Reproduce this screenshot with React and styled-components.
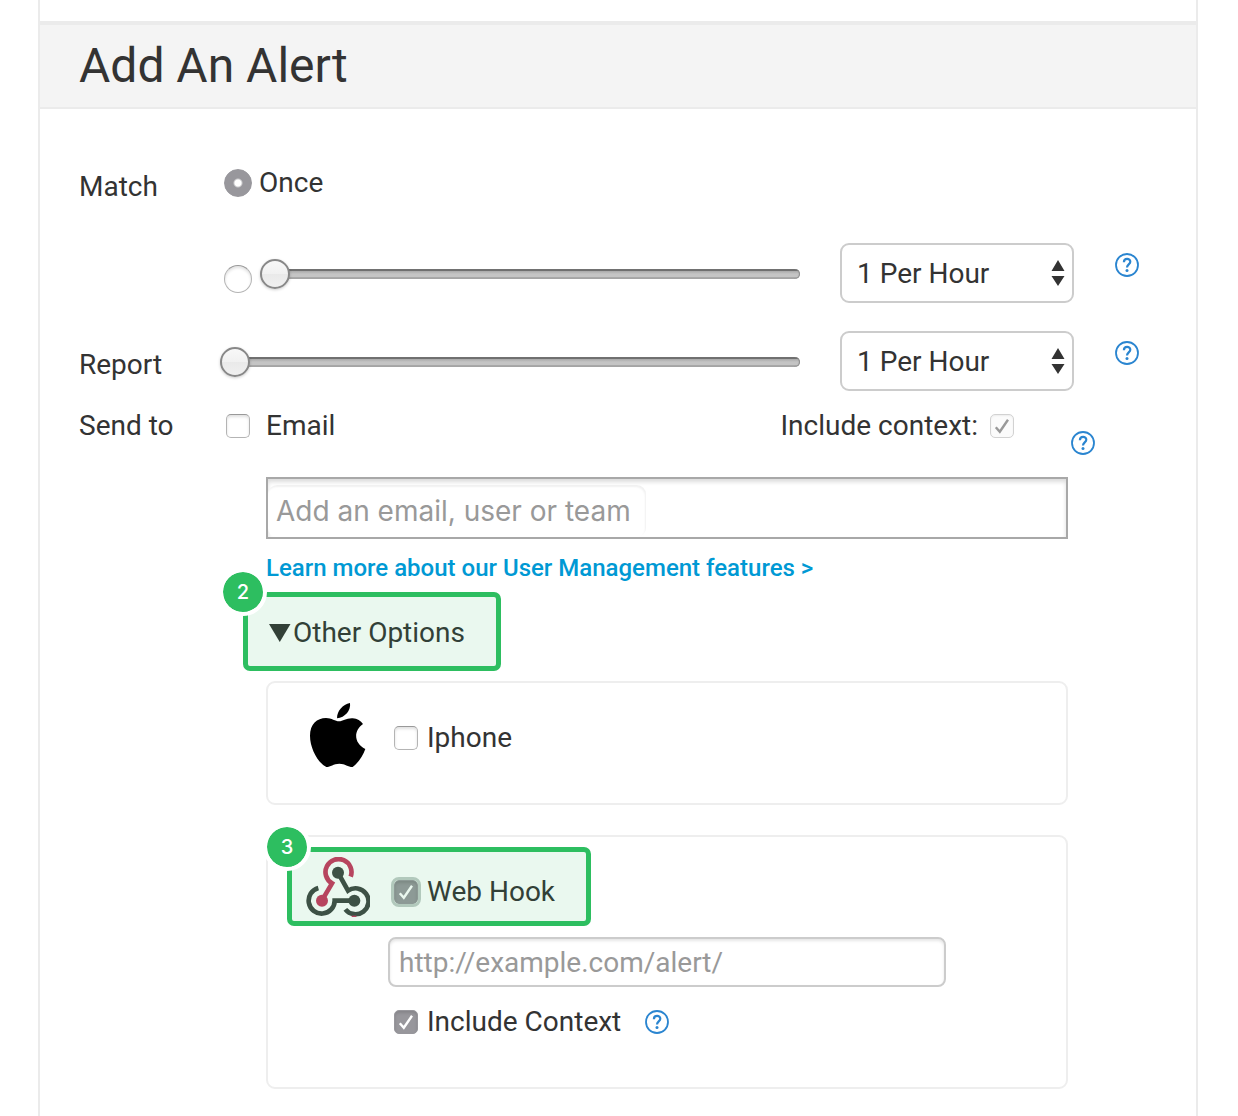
import React, { useState } from "react";
import styled, { createGlobalStyle, css } from "styled-components";

const green = "#2dbe60";
const ink = "#333";

const GlobalStyle = createGlobalStyle`
  *, *::before, *::after { box-sizing: border-box; }
  body {
    margin: 0;
    background: #fff;
    color: ${ink};
    font: 400 28px/36px Roboto, "Liberation Sans", sans-serif;
  }
  button, input, select { font: inherit; color: inherit; margin: 0; }
`;

const Page = styled.div`
  padding: 0 40px 0 38px;
  overflow-x: clip;
`;

const Panel = styled.main`
  min-height: 100vh;
  padding-top: 21px;
  border: solid #ebebeb;
  border-width: 0 2px;
`;

const Header = styled.header`
  padding: 10px 39px;
  background: #f4f4f4;
  border-top: 4px solid #ebebeb;
  border-bottom: 2px solid #ebebeb;
`;

const Title = styled.h1`
  margin: 0;
  font-size: 48px;
  font-weight: 400;
  line-height: 62px;
`;

const Form = styled.form`
  padding: 52px 57px 27px 39px;
`;

const Row = styled.div`
  display: grid;
  grid-template-columns: 141px minmax(0, 1fr) 234px 65px;
  align-items: center;
  margin-bottom: ${(p) => p.$space}px;
`;

const RowLabel = styled.span`
  padding-top: 8px;
`;

const SliderCell = styled.div`
  display: flex;
  align-items: center;
  gap: 8px;
  padding: 2px 40px 0 ${(p) => (p.$inset ? 4 : 0)}px;
`;

const HelpCell = styled.div`
  display: flex;
  align-self: start;
  justify-content: flex-end;
  padding-top: 10px;
`;

const Choice = styled.label`
  display: inline-flex;
  align-items: center;
  gap: ${(p) => p.$gap || 9}px;
  cursor: pointer;
`;

const OnceCell = styled.div`
  display: flex;
  grid-column: 2 / -1;
  padding-left: 4px;
`;

const Radio = styled.input.attrs({ type: "radio" })`
  appearance: none;
  flex: none;
  width: 28px;
  height: 28px;
  margin-top: ${(p) => (p.$low ? 10 : 0)}px;
  border: 1px solid #b4b4b4;
  border-top-color: #999;
  border-radius: 50%;
  background: #fff;
  box-shadow: inset 0 2px 3px rgba(0, 0, 0, 0.12);

  &:checked {
    border-color: #98979c;
    background: radial-gradient(circle, #fff 0 3px, #98979c 5px);
    box-shadow: none;
  }
`;

const Range = styled.input.attrs({ type: "range" })`
  appearance: none;
  flex: 1;
  min-width: 0;
  height: 30px;
  background: transparent;

  &::-webkit-slider-runnable-track {
    height: 10px;
    border-radius: 5px;
    background: linear-gradient(#6f6f6f 0 2px, #a9a9a9 2px, #c4c4c4 5px 8px, #a8a8a8 8px);
    box-shadow: inset -1px 0 1px #888;
  }

  &::-webkit-slider-thumb {
    appearance: none;
    width: 30px;
    height: 30px;
    margin-top: -10px;
    border: 2px solid #888;
    border-radius: 50%;
    background: linear-gradient(#f8f8f8, #f1f1f1 50%, #e9e9e9 50%, #f0f0f0);
    box-shadow: 0 1px 3px rgba(0, 0, 0, 0.2);
  }
`;

const SelectBox = styled.div`
  position: relative;

  svg {
    position: absolute;
    top: 17px;
    right: 9px;
    pointer-events: none;
  }
`;

const Select = styled.select`
  appearance: none;
  display: block;
  width: 100%;
  height: 60px;
  padding: 1px 40px 0 15px;
  border: 2px solid #ccc;
  border-radius: 9px;
  background: #fff;
`;

const HelpButton = styled.button`
  display: block;
  flex: none;
  width: 24px;
  height: 24px;
  padding: 0;
  border: 0;
  background: none;
  cursor: pointer;

  svg { display: block; }
`;

const SendRow = styled.div`
  display: flex;
  align-items: flex-start;
  padding-right: 44px;
`;

const SendLabel = styled.span`
  width: 147px;
`;

const ContextGroup = styled.div`
  display: flex;
  align-items: flex-start;
  gap: 57px;
  margin-left: auto;

  ${HelpButton} { margin-top: 23px; }
`;

const checkedLook = css`
  border-color: #98979c;
  background: #98979c;
`;

const Tick = styled.span`
  position: relative;
  display: inline-flex;
  flex: none;
  width: 24px;
  height: 24px;

  input {
    appearance: none;
    width: 24px;
    height: 24px;
    border: 1px solid #b4b4b4;
    border-top-color: #999;
    border-radius: 5px;
    background: #fff;
    box-shadow: inset 0 2px 3px rgba(0, 0, 0, 0.12);
  }
  input:checked { ${checkedLook} }
  input:disabled {
    border-color: #d2d2d2;
    background: #fbfbfb;
    box-shadow: inset 0 1px 2px rgba(0, 0, 0, 0.06);
  }
  svg {
    position: absolute;
    inset: 0;
    color: #fff;
    pointer-events: none;
  }
  input:disabled + svg { color: #999; }
  input:not(:checked) + svg { display: none; }

  ${(p) =>
    p.$ring &&
    css`
      input {
        outline: 3px solid #c1cbc7;
      }
    `}
`;

const SendBody = styled.div`
  padding: 22px 71px 0 187px;
`;

const Recipients = styled.div`
  display: flex;
  height: 62px;
  padding-top: 6px;
  border: 2px solid #a8a8a8;
  box-shadow: inset 0 3px 4px rgba(0, 0, 0, 0.14);
`;

const RecipientInput = styled.input`
  width: 378px;
  height: 52px;
  padding: 0 8px;
  border: 0;
  border-radius: 9px;
  background: #fff;
  box-shadow: inset -1px 2px 2px rgba(0, 0, 0, 0.06);
  font-family: Inter, "Liberation Sans", sans-serif;

  &::placeholder { color: #999; }
`;

const LearnMore = styled.a`
  display: block;
  width: fit-content;
  margin-top: 13px;
  color: #0099d4;
  font-size: 24px;
  font-weight: 500;
  line-height: 32px;
  text-decoration: none;
`;

const Marked = styled.div`
  position: relative;
  width: fit-content;
`;

const Highlight = styled.div`
  position: absolute;
  inset: ${(p) => p.$inset};
  border: 5px solid ${green};
  border-radius: 7px;
  background: rgba(45, 190, 96, 0.1);
  pointer-events: none;
`;

const StepBadge = styled.span`
  position: absolute;
  top: -29px;
  left: -29px;
  width: 48px;
  height: 48px;
  border: 4px solid #fff;
  border-radius: 50%;
  background: ${green};
  background-clip: padding-box;
  color: #fff;
  font: 500 20px/41px Inter, "Liberation Sans", sans-serif;
  text-align: center;
`;

const OptionsToggle = styled.button`
  display: flex;
  align-items: center;
  gap: 2px;
  padding: 0 0 0 3px;
  border: 0;
  background: none;
  cursor: pointer;
`;

const OptionsArea = styled.div`
  margin-top: 31px;
`;

const CardList = styled.div`
  display: flex;
  flex-direction: column;
  gap: 30px;
  margin-top: 30px;
`;

const Card = styled.section`
  padding: 20px 120px ${(p) => p.$bottom}px 38px;
  border: 2px solid #eee;
  border-radius: 9px;
`;

const CardHead = styled.div`
  display: flex;
  align-items: center;
  gap: 24px;

  > svg { display: block; }
  ${Choice} { padding-top: 6px; }
`;

const CardBody = styled.div`
  padding: 16px 0 0 82px;
`;

const UrlInput = styled.input`
  display: block;
  width: 100%;
  height: 50px;
  padding: 0 9px;
  border: 2px solid #ccc;
  border-radius: 8px;
  background: #fff;
  box-shadow: inset 0 2px 3px rgba(0, 0, 0, 0.1);

  &::placeholder { color: #999; }
`;

const ContextLine = styled.div`
  display: flex;
  align-items: center;
  gap: 24px;
  padding: 17px 0 0 6px;
`;

function Help({ topic }) {
  return (
    <HelpButton type="button" aria-label={`Help: ${topic}`}>
      <svg width="24" height="24" viewBox="0 0 24 24" fill="none" stroke="#2a85d0" aria-hidden="true">
        <circle cx="12" cy="12" r="11" strokeWidth="1.8" />
        <path d="M8.900 9.200C8.900 4.900 15.300 5 15.300 8.800c0 2.500-3.300 2.800-3.300 5.600" strokeWidth="2.200" />
        <circle cx="12" cy="17.600" r="1.500" fill="#2a85d0" stroke="none" />
      </svg>
    </HelpButton>
  );
}

function Checkbox({ ring, ...props }) {
  return (
    <Tick $ring={ring}>
      <input type="checkbox" {...props} />
      <svg width="24" height="24" viewBox="0 0 24 24" fill="none" stroke="currentColor" strokeWidth="2.4" aria-hidden="true">
        <path d="M5.800 13.200l4 4.600L18 5.800" />
      </svg>
    </Tick>
  );
}

function RateSelect({ label }) {
  return (
    <SelectBox>
      <Select aria-label={label} defaultValue="1">
        <option value="1">1 Per Hour</option>
      </Select>
      <svg width="14" height="27" viewBox="0 0 14 27" fill={ink} aria-hidden="true">
        <path d="M7 0l6.500 11H.5zM7 26L.5 16h13z" />
      </svg>
    </SelectBox>
  );
}

function AppleLogo() {
  return (
    <svg width="64" height="64" viewBox="168 99 192 192" aria-hidden="true">
      <path d="M300 99c3 22-15 44-39 46 0-22 17-42 39-46z" />
      <path d="M267 154c12 0 22-10 41-9 14 1 24 7 31 17-28 20-29 56 7 75-7 21-22 42-38 54-15 0-22-10-40-10s-26 10-39 10c-26-13-49-57-49-94 0-34 21-53 48-53 17 0 28 10 39 10z" />
    </svg>
  );
}

function WebhookLogo() {
  return (
    <svg width="64" height="64" viewBox="168 111 192 192" fill="none" strokeWidth="14" aria-hidden="true">
      <path d="M302 170A39 39 0 1 0 246 190L219 236" stroke="#c7385f" />
      <circle cx="216" cy="242" r="18" fill="#c7385f" />
      <path d="M264 158L294 212A39 39 0 1 1 286 268" stroke="#3f4642" />
      <path d="M313 242H254A39 39 0 1 1 205 204" stroke="#3f4642" />
      <circle cx="264" cy="158" r="18" fill="#3f4642" />
      <circle cx="313" cy="242" r="18" fill="#3f4642" />
      <path d="M305 289h14" stroke="#c7385f" strokeWidth="4" />
    </svg>
  );
}

export default function App() {
  const [mode, setMode] = useState("once");
  const [open, setOpen] = useState(true);

  return (
    <Page>
      <GlobalStyle />
      <Panel>
        <Header>
          <Title>Add An Alert</Title>
        </Header>
        <Form onSubmit={(e) => e.preventDefault()}>
          <Row $space={38}>
            <RowLabel>Match</RowLabel>
            <OnceCell>
              <Choice $gap={7}>
                <Radio name="match" checked={mode === "once"} onChange={() => setMode("once")} />
                Once
              </Choice>
            </OnceCell>
          </Row>

          <Row $space={28}>
            <span />
            <SliderCell $inset>
              <Radio
                $low
                name="match"
                aria-label="Match at a rate"
                checked={mode === "rate"}
                onChange={() => setMode("rate")}
              />
              <Range aria-label="Match rate" defaultValue={0} />
            </SliderCell>
            <RateSelect label="Match frequency" />
            <HelpCell>
              <Help topic="match" />
            </HelpCell>
          </Row>

          <Row $space={17}>
            <RowLabel>Report</RowLabel>
            <SliderCell>
              <Range aria-label="Report rate" defaultValue={0} />
            </SliderCell>
            <RateSelect label="Report frequency" />
            <HelpCell>
              <Help topic="report" />
            </HelpCell>
          </Row>

          <SendRow>
            <SendLabel>Send to</SendLabel>
            <Choice $gap={16}>
              <Checkbox />
              Email
            </Choice>
            <ContextGroup>
              <Choice $gap={12}>
                Include context:
                <Checkbox defaultChecked disabled />
              </Choice>
              <Help topic="context" />
            </ContextGroup>
          </SendRow>

          <SendBody>
            <Recipients>
              <RecipientInput aria-label="Recipients" placeholder="Add an email, user or team" />
            </Recipients>
            <LearnMore href="#users">Learn more about our User Management features &gt;</LearnMore>

            <OptionsArea>
              <Marked>
                <OptionsToggle type="button" aria-expanded={open} onClick={() => setOpen(!open)}>
                  <svg width="22" height="18" viewBox="0 0 22 18" fill={ink} aria-hidden="true">
                    <path d="M0 0h21.500L10.750 18z" />
                  </svg>
                  Other Options
                </OptionsToggle>
                <Highlight $inset="-23px -36px -20px -23px">
                  <StepBadge>2</StepBadge>
                </Highlight>
              </Marked>

              {open && (
                <CardList>
                  <Card $bottom={36}>
                    <CardHead>
                      <AppleLogo />
                      <Choice>
                        <Checkbox />
                        Iphone
                      </Choice>
                    </CardHead>
                  </Card>

                  <Card $bottom={47}>
                    <Marked>
                      <CardHead>
                        <WebhookLogo />
                        <Choice>
                          <Checkbox ring defaultChecked />
                          Web Hook
                        </Choice>
                      </CardHead>
                      <Highlight $inset="-10px -36px -5px -19px">
                        <StepBadge>3</StepBadge>
                      </Highlight>
                    </Marked>
                    <CardBody>
                      <UrlInput type="url" aria-label="Web hook URL" placeholder="http://example.com/alert/" />
                      <ContextLine>
                        <Choice>
                          <Checkbox defaultChecked />
                          Include Context
                        </Choice>
                        <Help topic="web hook context" />
                      </ContextLine>
                    </CardBody>
                  </Card>
                </CardList>
              )}
            </OptionsArea>
          </SendBody>
        </Form>
      </Panel>
    </Page>
  );
}
